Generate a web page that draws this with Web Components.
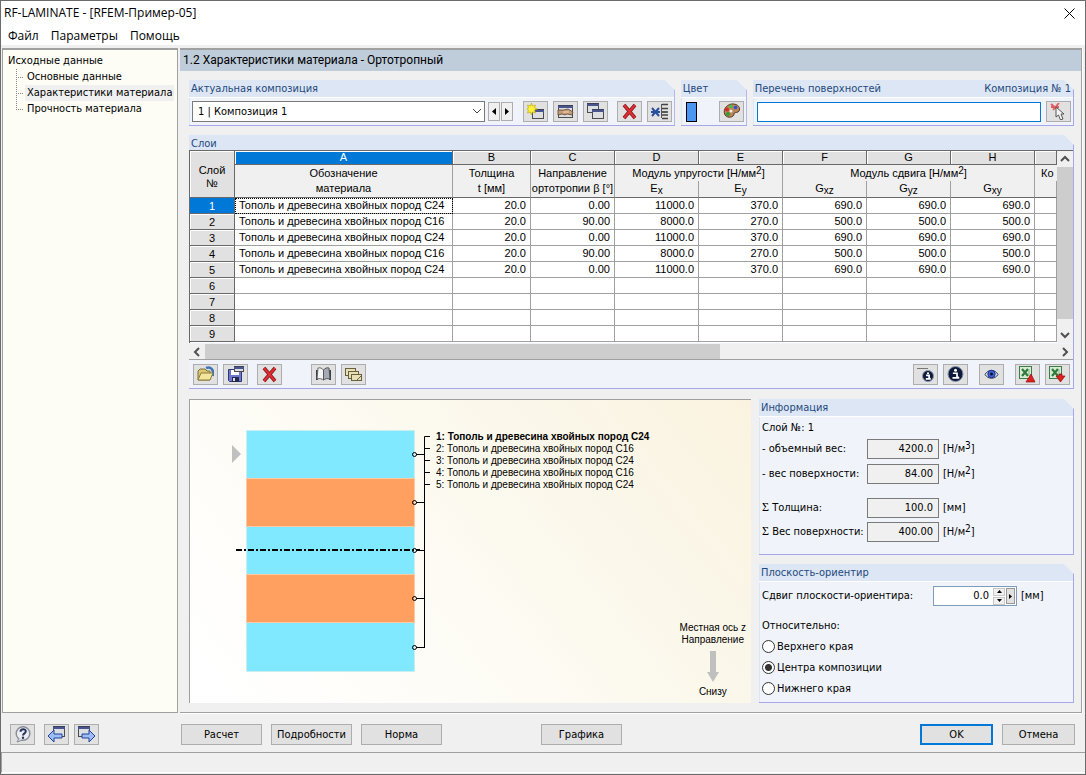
<!DOCTYPE html>
<html lang="ru">
<head>
<meta charset="utf-8">
<title>RF-LAMINATE - [RFEM-Пример-05]</title>
<style>
html, body { margin: 0; height: 100%; }
body { font: 11px/14px "DejaVu Sans Condensed", "Noto Sans", sans-serif; color: #000; background: #f0f0f0; }
</style>
</head>
<body>
<laminate-window></laminate-window>
<script>
const define = (name, html, setup) => {
  const template = document.createElement('template');
  template.innerHTML = '<style>*{box-sizing:border-box}button,input,select{font:inherit;color:inherit;margin:0}</style>' + html;
  customElements.define(name, class extends HTMLElement {
    connectedCallback() {
      if (this.shadowRoot) return;
      this.attachShadow({ mode: 'open' }).append(template.content.cloneNode(true));
      if (setup) setup(this, this.shadowRoot);
    }
  });
};

const disc = (cx, cy, r) => `<circle cx="${cx}" cy="${cy}" r="${r}" fill="#0d1a3c" stroke="#8a93a8"/><path d="M${cx - r * .35} ${cy - r * .1}h${r * .55}v${r * .55}h${r * .25}M${cx - r * .4} ${cy + r * .52}h${r * .9}" stroke="#fff" stroke-width="1.7" fill="none"/><circle cx="${cx}" cy="${cy - r * .5}" r="${r * .2}" fill="#fff"/>`;
const win = (x, y, w, h) => `<rect x="${x + .5}" y="${y + .5}" width="${w - 1}" height="${h - 1}" fill="#dcdfe2" stroke="#4c4c50"/><rect x="${x}" y="${y}" width="${w}" height="3" fill="#4a5590"/><path d="M${x} ${y + .5}h${w}" stroke="#39405c"/>`;
const cross = '<path d="M3 2l11 13M14 2L3 15" stroke="#7d1a1e" stroke-width="3.6"/><path d="M3 2l11 13M14 2L3 15" stroke="#e02c32" stroke-width="2"/>';
const excel = '<rect x=".5" y=".5" width="12" height="12" fill="#d7ecd6" stroke="#3d7d45"/><path d="M3 3l6 7M9 3l-6 7" stroke="#2d7a3a" stroke-width="2.2"/><path d="M10 3v7" stroke="#88b58b"/>';
const icons = {
  create: win(5, 6, 12, 10) + '<path d="M4.5 0l1 3 3-1-1 3 3 1-3 1 1 3-3-1-1 3-1-3-3 1 1-3-3-1 3-1-1-3 3 1z" fill="#fff23a" stroke="#b9a200" stroke-width=".6"/>',
  rename: win(1, 2, 15, 13) + '<path d="M1 7h6l4-1 5 3-1 3-5-1-2 1-3-1-4 1z" fill="#c49b76" stroke="#5c432f" stroke-width=".8"/><path d="M6 9h6" stroke="#f3d8bd"/>',
  copy: win(0, 0, 12, 10) + win(5, 6, 12, 10),
  remove: cross,
  clearTree: '<path d="M1 5l7 8M8 5l-7 8M0 9h9" stroke="#28509f" stroke-width="2"/><path d="M10.500 1v14M10 9h6" stroke="#555" fill="none"/><path d="M11 1.500h6M11 5.500h6M11 9h6M11 12h6M11 15.500h6" stroke="#444" stroke-width="1.500"/>'.replaceAll('.500', '.5'),
  palette: '<path d="M2 12C-1 6 5 0 11 1c6 1 7 6 4 8-2 1-4 0-4 2 0 3-6 5-9 1z" fill="#b9855a" stroke="#5a3b22"/><circle cx="5" cy="11" r="2" fill="#2fa02f"/><circle cx="4" cy="6.5" r="2" fill="#d92a2a"/><circle cx="8" cy="3.5" r="1.7" fill="#3fc04a"/><circle cx="12.5" cy="4.5" r="1.8" fill="#2a51d8"/><circle cx="8" cy="8" r="1.5" fill="#f5eee5"/>',
  pick: '<path d="M1 1l7 6M9 0L3 7M1 4h8" stroke="#e05a5e" stroke-width="1.8"/><path d="M6 4v10l2.5-2 2 5 2.5-1-2-5h3z" fill="#f4f4f4" stroke="#555"/>',
  open: '<path d="M9 2c5-2 8 2 7 8" fill="none" stroke="#3f74b4" stroke-width="2.5"/><path d="M1 5l2-2h5l2 2h3v9H1z" fill="#d9c778" stroke="#7d6f31"/><path d="M1 14l3-7h12l-3 7z" fill="#f3e59b" stroke="#8b7c39"/>',
  save: '<path d="M1.5 3.5h13v12h-12l-1-1z" fill="#6f78cf" stroke="#30366e"/><rect x="4" y="4" width="8" height="5" fill="#fff"/><rect x="5" y="11" width="7" height="5" fill="#222a4a"/><rect x="6" y="12" width="2" height="3" fill="#dde"/>' + win(7, 0, 10, 6),
  book: '<path d="M1 4h2v10H1zM14 4h2v10h-2z" fill="#3b3f4b"/><path d="M8.5 4C7 2 5 1.500 3 2L2 13c3-1 5 0 6.500 1z" fill="#f4f5f7" stroke="#666"/><path d="M8.500 4C10 2 12 1.500 14 2l1 11c-3-1-5 0-6.500 1z" fill="#a4aab6" stroke="#555"/>'.replaceAll('.500', '.5'),
  stack: '<rect x=".5" y="2.5" width="10" height="7" fill="#e8dfb6" stroke="#66603f"/><rect x="3.5" y="5.5" width="10" height="7" fill="#e8dfb6" stroke="#66603f"/><rect x="6.5" y="8.5" width="10" height="6" fill="#e8dfb6" stroke="#66603f"/><path d="M12 14l4-4" stroke="#66603f"/>',
  infoRow: '<path d="M0 2.5h11" stroke="#777"/>' + disc(11, 10, 5.5),
  info: disc(8.5, 8, 7.5),
  eye: '<path d="M2 8.5C5 3 12 3 15 8.5 12 13.5 5 13.5 2 8.5z" fill="#dfe5f6" stroke="#333b55"/><circle cx="8.5" cy="8" r="3.7" fill="#3f66d8" stroke="#1e2f7c"/><circle cx="8.5" cy="8" r="1.5" fill="#0a0f2c"/>',
  exportXls: excel + '<path d="M12 8l4 8H7z" fill="#e02020" stroke="#8a0f0f" stroke-width=".7"/>',
  importXls: excel + '<path d="M10 8h3v2h3l-4.5 6L7 10h3z" fill="#e02020" stroke="#8a0f0f" stroke-width=".7"/>',
  help: '<circle cx="9" cy="7.5" r="6.800" fill="#eceef2" stroke="#8a8f98" stroke-width="1.5"/><path d="M5 12l-2 4 6-2" fill="#d5d8de" stroke="#8a8f98"/><path d="M6.500 5.800c0-3.500 5.500-3.500 5.300-.3C11.700 7.300 9 7.500 9 9.500" fill="none" stroke="#27335f" stroke-width="2"/><circle cx="9" cy="11.700" r="1.200" fill="#27335f"/>'.replace(/(\.\d)00/g, '$1'),
  back: win(5, 0, 12, 11) + '<path d="M0 10l6-6v4h8v4H6v4z" fill="#9dbcf5" stroke="#23429a"/>',
  next: win(0, 0, 12, 11) + '<path d="M17 10l-6-6v4H4v4h7v4z" fill="#9dbcf5" stroke="#23429a"/>'
};

/* Square push button with one pictogram */
define('tool-button', `<style>
:host{display:block;flex:none;width:25px;height:21px}
button{display:grid;place-items:center;width:100%;height:100%;padding:0;border:1px solid #adadad;background:#e1e1e1}
svg{width:17px;height:17px;display:block}
</style><button type="button"></button>`, (host, root) => {
  const b = root.querySelector('button');
  b.setAttribute('aria-label', host.getAttribute('label'));
  b.innerHTML = `<svg viewBox="0 0 17 17" aria-hidden="true">${icons[host.getAttribute('icon')]}</svg>`;
});

define('push-button', `<style>
:host{display:block;flex:none;width:81px;height:21px}
:host([narrow]){width:73px}
button{width:100%;height:100%;padding:0;border:1px solid #adadad;background:#e1e1e1}
:host([primary]) button{border:2px solid #0078d7}
</style><button type="button"><slot></slot></button>`);

/* Titled panel with a cut corner; "flush" lets its content touch the header and the left edge */
define('group-box', `<style>
:host{display:flex;flex-direction:column;background:#f0f4fa;border:solid #a6a6ea;border-width:0 1px 1px 0;clip-path:polygon(0 0,calc(100% - 10px) 0,100% 10px,100% 100%,0 100%)}
header{display:flex;justify-content:space-between;height:18px;padding:1px 2px 0;background:#dce6f4;border-bottom:1px solid #fff;color:#1f497d;line-height:15px}
.body{flex:1;min-height:0;border-left:1px solid #dce6f4}
:host([flush]) header{height:15px;border:0}
:host([flush]) .body{border:0}
</style><header><span><slot name="title"></slot></span><span><slot name="extra"></slot></span></header><div class="body"><slot></slot></div>`);

define('title-bar', `<style>
:host{display:block;background:#fff;font:12px/16px "Open Sans","Noto Sans",sans-serif}
.caption{display:flex;justify-content:space-between;align-items:center;height:24px;padding:0 10px 0 3px}
.caption button{border:0;background:none;padding:0;width:11px;height:11px}
svg{display:block}
nav{display:flex;gap:12px;padding:3px 7px 0;height:20px}
nav a{color:#000;text-decoration:none}
</style>
<div class="caption"><span>RF-LAMINATE - [RFEM-Пример-05]</span><button type="button" aria-label="Закрыть"><svg width="11" height="11" viewBox="0 0 11 11"><path d="M.5.5l10 10M10.5.5l-10 10" stroke="#000"/></svg></button></div>
<nav><a href="#file">Файл</a><a href="#options">Параметры</a><a href="#help">Помощь</a></nav>`);

define('nav-tree', `<style>
:host{display:block;width:176px;flex:none;background:#fdfdf5;border:1px solid #a0a0a0;border-top-width:2px;padding:3px 3px}
ul{list-style:none;margin:0;padding:0}
li{line-height:16px;white-space:nowrap}
a{color:#000;text-decoration:none;display:inline-block;padding:0 2px}
li li{margin-left:10px;padding-left:9px;background:repeating-linear-gradient(90deg,#888 0 1px,transparent 1px 2px) 0 8px/8px 1px no-repeat,repeating-linear-gradient(#888 0 1px,transparent 1px 2px) 0 0/1px 16px no-repeat}
li li:last-child{background-size:8px 1px,1px 8px}
.on{background:#f0f0f0}
</style><ul><li><a href="#input">Исходные данные</a><ul><li><a href="#general">Основные данные</a></li><li><a class="on" href="#material">Характеристики материала</a></li><li><a href="#strength">Прочность материала</a></li></ul></li></ul>`);

define('composition-bar', `<style>
:host{display:flex;gap:6px}
.row{display:flex;align-items:center;height:27px;padding:0 2px}
.first{flex:486 1 0}.color{flex:none;width:66px}.list{flex:321 1 0}
.combo{position:relative;flex:1;display:flex;min-width:0}
select{appearance:none;width:100%;height:21px;border:1px solid #7a7a7a;border-radius:0;background:#fff;padding:0 5px}
.combo svg{position:absolute;right:3px;top:7px;pointer-events:none}
.step{width:12px;height:19px;padding:0;border:1px solid #adadad;background:#f0f0f0;display:grid;place-items:center;margin-left:1px}
.combo + .step{margin-left:3px}
.gap{margin-left:10px}.sep{margin-left:9px}.close{margin-left:5px}
.swatch{width:11px;height:20px;border:1px solid #000;background:#4a96f0;margin:0 auto 0 2px;padding:0}
input{flex:1;min-width:0;height:20px;border:1px solid #0078d7;background:#fff;outline:0;padding:0 4px;margin-left:1px}
</style>
<group-box class="first"><label slot="title" for="comp">Актуальная композиция</label>
<div class="row"><span class="combo"><select id="comp"><option>1 | Композиция 1</option></select><svg width="10" height="7"><path d="M1 1l4 4 4-4" fill="none" stroke="#444"/></svg></span>
<button class="step" type="button" aria-label="Назад"><svg width="4" height="7"><path d="M4 0v7L0 3.5z"/></svg></button><button class="step" type="button" aria-label="Вперёд"><svg width="4" height="7"><path d="M0 0v7l4-3.5z"/></svg></button>
<tool-button class="gap" icon="create" label="Создать"></tool-button><tool-button class="close" icon="rename" label="Переименовать"></tool-button><tool-button class="close" icon="copy" label="Копировать"></tool-button><tool-button class="sep" icon="remove" label="Удалить"></tool-button><tool-button class="close" icon="clearTree" label="Удалить все"></tool-button></div></group-box>
<group-box class="color"><span slot="title">Цвет</span><div class="row"><button class="swatch" type="button" aria-label="Цвет композиции"></button><tool-button icon="palette" label="Выбрать цвет"></tool-button></div></group-box>
<group-box class="list"><label slot="title" for="surfaces">Перечень поверхностей</label><span slot="extra">Композиция № 1</span><div class="row"><input id="surfaces" type="text"><tool-button class="close" icon="pick" label="Выбрать на графике"></tool-button></div></group-box>`);

const layers = [['11000.0', '370.0', '690.0', 'C24', '0.00'], ['8000.0', '270.0', '500.0', 'C16', '90.00']];
const timber = 'Тополь и древесина хвойных пород ';
const rowsHtml = Array.from({ length: 9 }, (_, i) => {
  const l = i < 5 ? layers[i % 2] : null;
  const cells = l ? [timber + l[3], '20.0', l[4], l[0], l[1], l[2], l[2], l[2], ''] : Array(9).fill('');
  return `<tr><th scope="row"${i ? '' : ' class="on"'}>${i + 1}</th>${cells.map((c, k) => `<td${!i && !k ? ' class="focus"' : ''}>${c}</td>`).join('')}</tr>`;
}).join('');

define('layer-table', `<style>
:host{display:block;font:11px/15px "Liberation Sans",Arial,sans-serif}
.view{display:grid;grid-template-columns:minmax(0,1fr) 16px;border:solid #696969;border-width:1px 0 0 1px}
.clip{overflow:hidden;background:#fff;padding-bottom:1px}
table{border-collapse:separate;border-spacing:0;table-layout:fixed;width:100%}
th,td{padding:0;font-weight:400;height:16px;border:solid #a0a0a0;border-width:0 1px 1px 0;white-space:nowrap;overflow:hidden}
td{text-align:right;padding-right:4px}
td:nth-child(2){text-align:left;padding:0 0 0 4px}
thead th{background:#f0f0f0}
thead .letter th{background:#e1e1e1;height:14px;line-height:13px;border-color:#696969;box-shadow:inset 1px 1px #fff}
thead .letter .on{background:#0078d7;color:#fff}
thead .letter .corner{vertical-align:top;padding-top:13px;border-color:#696969}
.top th{border-bottom:0}
thead .top .cut{text-align:left;padding-left:6px;border-right:0}
thead .rule th{border-bottom-color:#696969;height:17px;vertical-align:top}
tbody th{background:#e1e1e1;border-color:#696969;box-shadow:inset 1px 1px #fff;line-height:14px}
tbody th.on{background:#0078d7;color:#fff;box-shadow:none}
.focus{outline:1px dotted #000;outline-offset:-1px}
sub{font-size:10px;vertical-align:-2px;line-height:1px}sup{font-size:10px;vertical-align:3px;line-height:1px}
.v{display:flex;flex-direction:column;background:#f0f0f0}
.v i{flex:1;display:block}.v i:nth-of-type(1){flex:20;background:#cdcdcd}
.v svg,.h svg{flex:none;display:block}
.h{display:flex;height:16px;background:#f0f0f0;border-bottom:1px solid #a0a0a0;margin-top:1px}
.h i{flex:337}.h i:first-of-type{background:#cdcdcd;flex:516}
</style>
<div class="view"><div class="clip"><table>
<colgroup><col style="width:45px"><col style="width:218px"><col style="width:78px"><col style="width:84px"><col style="width:84px"><col style="width:84px"><col style="width:84px"><col style="width:84px"><col style="width:84px"><col></colgroup>
<thead><tr class="letter"><th rowspan="3" class="corner">Слой<br>№</th><th class="on">A</th><th>B</th><th>C</th><th>D</th><th>E</th><th>F</th><th>G</th><th>H</th><th></th></tr>
<tr class="top"><th>Обозначение</th><th>Толщина</th><th>Направление</th><th colspan="2">Модуль упругости [Н/мм<sup>2</sup>]</th><th colspan="3">Модуль сдвига [Н/мм<sup>2</sup>]</th><th class="cut">Ко</th></tr>
<tr class="rule"><th>материала</th><th>t [мм]</th><th>ортотропии β [°]</th><th>E<sub>x</sub></th><th>E<sub>y</sub></th><th>G<sub>xz</sub></th><th>G<sub>yz</sub></th><th>G<sub>xy</sub></th><th></th></tr></thead>
<tbody>${rowsHtml}</tbody></table></div>
<div class="v"><svg width="16" height="16"><path d="M4 10l4-4 4 4" fill="none" stroke="#505050" stroke-width="2"/></svg><i></i><i></i><svg width="16" height="16"><path d="M4 6l4 4 4-4" fill="none" stroke="#505050" stroke-width="2"/></svg></div></div>
<div class="h"><svg width="16" height="15"><path d="M10 4L6 8l4 4" fill="none" stroke="#505050" stroke-width="2"/></svg><i></i><i></i><svg width="16" height="15"><path d="M6 4l4 4-4 4" fill="none" stroke="#505050" stroke-width="2"/></svg></div>`);

define('layers-panel', `<style>
:host{display:block}
.tools{display:flex;align-items:center;gap:5px;height:28px;padding:0 3px 0 4px}
.sep{margin-left:4px}.wide{margin-left:24px}.right{margin-left:auto}.mid{margin-left:6px}
</style><group-box flush><span slot="title">Слои</span><layer-table></layer-table>
<div class="tools"><tool-button icon="open" label="Открыть"></tool-button><tool-button icon="save" label="Сохранить"></tool-button><tool-button class="sep" icon="remove" label="Удалить"></tool-button><tool-button class="wide" icon="book" label="Библиотека"></tool-button><tool-button icon="stack" label="Слои"></tool-button>
<tool-button class="right" icon="infoRow" label="Сведения о слое"></tool-button><tool-button icon="info" label="Сведения"></tool-button><tool-button class="mid" icon="eye" label="Показать"></tool-button><tool-button class="mid" icon="exportXls" label="Экспорт"></tool-button><tool-button icon="importXls" label="Импорт"></tool-button></div></group-box>`);

define('layer-diagram', `<style>
:host{display:flex;font:10px/12px "Liberation Sans",Arial,sans-serif;border:solid #a0a0a0;border-width:1px 0 0 1px;background:linear-gradient(50deg,#fff 5%,#fdfbf3 45%,#faf6e8 75%,#fbf3e0)}
svg{display:block;flex:none}
ol{list-style:none;margin:31px 0 0 5px;padding:0;white-space:nowrap}
li:first-child{font-weight:700}
.axis{margin:auto 5px 5px auto;text-align:center}
.axis svg{margin:5px auto 4px}
</style>
<svg width="241" height="280" viewBox="0 0 241 280">
<path d="M42 45v18l9-9z" fill="#c0c0c0"/>
<g stroke="#c9eef0"><path d="M56.5 30.5h168v48h-168zM56.5 126.5h168v48h-168zM56.5 222.5h168v49h-168z" fill="#80e9ff"/></g>
<g stroke="#ffc9a4"><path d="M56.5 78.5h168v48h-168zM56.5 174.5h168v48h-168z" fill="#ff9f60"/></g>
<path d="M46 150h184" stroke="#000" stroke-width="2" stroke-dasharray="6 2 2 2"/>
<path d="M240 36.5h-5.5v211M235 48.5h5M235 60.5h5M235 72.5h5M235 84.5h5M226 54.5h9M226 102.5h9M226 150.5h9M226 198.5h9M226 247.5h9" fill="none" stroke="#000"/>
<g fill="none" stroke="#000"><circle cx="224.5" cy="54.5" r="2"/><circle cx="224.5" cy="102.5" r="2"/><circle cx="224.5" cy="150.5" r="2"/><circle cx="224.5" cy="198.5" r="2"/><circle cx="224.5" cy="247.5" r="2"/></g></svg>
<ol>${[0, 1, 2, 3, 4].map(i => `<li>${i + 1}: ${timber}${layers[i % 2][3]}</li>`).join('')}</ol>
<div class="axis">Местная ось z<br>Направление<svg width="16" height="31"><path d="M5 0h6v21h3l-6 10-6-10h3z" fill="#c0c0c0"/></svg>Снизу</div>`);

define('info-panel', `<style>
:host{display:block}group-box{height:100%}
p{margin:4px 0 3px 2px}
.f{display:grid;grid-template-columns:101px 72px 1fr;column-gap:4px;align-items:center;padding-left:2px;height:21px;margin-bottom:4px;white-space:nowrap}
.f:nth-of-type(2){margin-bottom:13px}
.f:nth-of-type(3){margin-bottom:3px}
input{height:20px;width:72px;border:1px solid #7a7a7a;background:#f0f0f0;text-align:right;padding:0 5px}
sup{font-size:10px;vertical-align:3px;line-height:1px}
i{font:12px "Liberation Serif",serif}
</style><group-box><span slot="title">Информация</span><p>Слой №: 1</p>
<div class="f"><label for="a">- объемный вес:</label><input id="a" readonly value="4200.0"><span>[Н/м<sup>3</sup>]</span></div>
<div class="f"><label for="b">- вес поверхности:</label><input id="b" readonly value="84.00"><span>[Н/м<sup>2</sup>]</span></div>
<div class="f"><label for="c"><i>Σ</i> Толщина:</label><input id="c" readonly value="100.0"><span>[мм]</span></div>
<div class="f"><label for="d"><i>Σ</i> Вес поверхности:</label><input id="d" readonly value="400.00"><span>[Н/м<sup>2</sup>]</span></div></group-box>`);

define('plane-panel', `<style>
:host{display:block}
.off{display:flex;align-items:center;padding:4px 2px 0}
.off label{flex:none;width:171px}
.spin{display:flex;align-items:center;width:84px;height:20px;border:1px solid #7f9db9;background:#fff;padding:0 1px;gap:1px}
input[type=text]{flex:1;min-width:0;border:0;padding:0 3px;text-align:right;background:none;outline:0}
.ud{display:grid;gap:1px}
.spin button{padding:0;border:1px solid #c8c8c8;background:#f0f0f0;display:grid;place-items:center;width:12px;height:8px}
.spin .go{width:9px;height:16px;border-color:#999;background:#e1e1e1}
.mm{margin-left:4px}
fieldset{border:0;margin:13px 0 0;padding:0 0 3px 2px}
legend{padding:0;height:17px}
fieldset label{display:flex;align-items:center;gap:2px;height:21px}
input[type=radio]{appearance:none;width:13px;height:13px;border:1px solid #333;border-radius:50%;background:#fff}
input[type=radio]:checked{background:radial-gradient(circle,#333 0 3px,#fff 4px)}
</style><group-box><span slot="title">Плоскость-ориентир</span>
<div class="off"><label for="o">Сдвиг плоскости-ориентира:</label><span class="spin"><input type="text" id="o" value="0.0"><span class="ud"><button type="button" aria-label="Больше"><svg width="5" height="3"><path d="M0 3h5L2.5 0z"/></svg></button><button type="button" aria-label="Меньше"><svg width="5" height="3"><path d="M0 0h5L2.5 3z"/></svg></button></span><button class="go" type="button" aria-label="Ещё"><svg width="3" height="5"><path d="M0 0v5l3-2.5z"/></svg></button></span><span class="mm">[мм]</span></div>
<fieldset><legend>Относительно:</legend><label><input type="radio" name="r">Верхнего края</label><label><input type="radio" name="r" checked>Центра композиции</label><label><input type="radio" name="r">Нижнего края</label></fieldset></group-box>`);

define('action-bar', `<style>
:host{display:flex;align-items:center;gap:9px;padding:0 10px 0 9px;height:35px}
.next{margin-left:-4px}.calc{margin-left:73px}.graph{margin-left:90px}.ok{margin-left:auto}
</style><tool-button icon="help" label="Справка"></tool-button><tool-button icon="back" label="Назад"></tool-button><tool-button class="next" icon="next" label="Далее"></tool-button>
<push-button class="calc">Расчет</push-button><push-button>Подробности</push-button><push-button>Норма</push-button><push-button class="graph">Графика</push-button><push-button class="ok" narrow primary>OK</push-button><push-button narrow>Отмена</push-button>`);

define('laminate-window', `<style>
:host{display:flex;flex-direction:column;min-height:100%;box-sizing:border-box;border:1px solid #6b6b6b;background:#f0f0f0}
main{flex:1;display:flex;gap:2px;margin:3px 3px 0 1px;min-height:0}
.page{flex:1;min-width:0;display:flex;flex-direction:column;border:solid #a0a0a0;border-width:2px 1px 1px 0;box-shadow:0 1px #fff,1px 0 #fff}
h1{margin:0;font:12px/21px Roboto,"Noto Sans",sans-serif;background:#bfcddb;padding:0 3px;height:21px}
.content{flex:1;display:flex;flex-direction:column;padding:9px 7px 9px 9px}
layers-panel{margin:9px 0 10px}
.lower{flex:1;display:flex;gap:8px}
layer-diagram{flex:1}
.side{flex:none;width:315px;display:flex;flex-direction:column;gap:9px}
.side info-panel{flex:1}
action-bar{margin-top:4px}
.status{height:21px;border:solid #a0a0a0;border-width:1px 0 0 1px;border-bottom:1px solid #fff;margin-bottom:1px}
</style>
<title-bar></title-bar>
<main><nav-tree></nav-tree><section class="page"><h1>1.2 Характеристики материала - Ортотропный</h1>
<div class="content"><composition-bar></composition-bar><layers-panel></layers-panel>
<div class="lower"><layer-diagram></layer-diagram><div class="side"><info-panel></info-panel><plane-panel></plane-panel></div></div></div></section></main>
<action-bar></action-bar><div class="status"></div>`);
</script>
</body>
</html>
